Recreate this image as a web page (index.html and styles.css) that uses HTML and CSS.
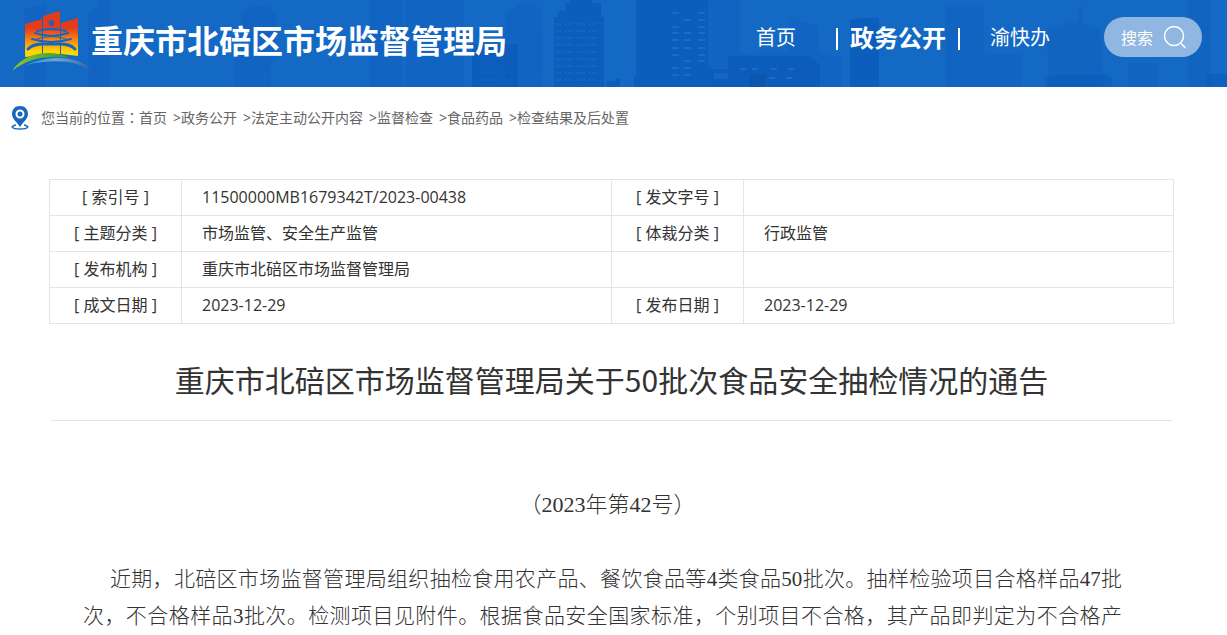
FILE: index.html
```html
<!DOCTYPE html>
<html lang="zh-CN">
<head>
<meta charset="utf-8">
<title>重庆市北碚区市场监督管理局</title>
<link rel="stylesheet" href="styles.css">
</head>
<body>
<header class="header">
  <svg class="skyline" viewBox="0 0 1227 87" preserveAspectRatio="xMidYMax slice" aria-hidden="true">
    <defs>
      <pattern id="win" width="12" height="7" patternUnits="userSpaceOnUse"><path d="M1 3h2m1 0h2m1 0h2" stroke="#2876cb" stroke-width="2" opacity=".35"/></pattern>
      <pattern id="fine" width="20" height="7" patternUnits="userSpaceOnUse"><path d="M1 3h7m3 0h7" stroke="#2472c8" stroke-width="1" stroke-dasharray="2 1" opacity=".35"/></pattern>
    </defs>
    <g fill="#0d58b8" opacity=".25">
      <path d="M24 87V10l22-6v83zM88 87V14l10-8V0h12v87zM234 87V60l7-9V14l12-8h14l9 9v42l-5 8v22zM369 87V0h34v87zM406 87V0h58v87zM505 87V13l17-10h9l12 7v77zM740 87V54l48-3V17l31 10v27l23 3v30zM945 87V5h39v82zM984 87V53l38 2v32zM1128 87V63h30v24zM1188 87V0h23v87zM708 87V0h32v87z"/>
      <path d="M1048 87V60l-1-31 18-5 5-3 10 3 19 5 4 31v27zM1078 25V7h5v18z"/>
    </g>
    <g fill="#0956b8" opacity=".6">
      <path d="M472 87V44h46v43zM554 87V17h4v-6h7V3h5V0h22v3h9v14h3v70zM636 87V0h72v87zM607 87v-6h8v-2h5v8zM634 87V75h8v12zM694 87V69h34V56h81l11 9v22zM850 87V20l12-2h17v69z"/>
    </g>
    <path fill="#0956b8" opacity=".4" d="M1045 87v-9l12-3h50l5 3v9zM1206 87V74h21v13z"/>
    <path fill="url(#win)" d="M556 19h46v64h-46z"/>
    <path fill="url(#fine)" d="M154 60h38v26h-38zM241 70h30v16h-30zM478 49h36v32h-36zM433 60h34v24h-34zM1052 39h46v30h-46zM0 50h13v34H0zM708 2h28v46h-28zM522 13h18v70h-18z"/>
    <path d="M672 13h7m19 0h7m-21 7h7m7 0h7m-33 7h7m19 0h7m-33 6h7m5 0h7m7 0h7m-33 7h7m5 0h7m7 0h7m-33 8h7m5 0h7m7 0h7m-33 7h7m19 0h7m-21 6h7m7 0h7M672 68h7m5 0h7M672 75h7m5 0h7M740 69h6m6 0h6m13 0h6m11 0h6m-25 9h6m11 0h6" stroke="#2473cb" stroke-width="2" opacity=".7"/>
    <path d="M749 74h16v13h-16z" fill="#0b4f9f" opacity=".45"/>
    <path d="M714 73h14v6h-14z" fill="#1d6cc4" opacity=".7"/>
  </svg>
  <a class="brand" href="#">
    <svg class="logo" viewBox="0 0 80 63" aria-hidden="true">
      <defs>
        <linearGradient id="fire" gradientUnits="userSpaceOnUse" x1="0" y1="1" x2="0" y2="46"><stop offset=".38" stop-color="#e33b1c"/><stop offset=".65" stop-color="#f58a12"/><stop offset=".9" stop-color="#ffd400"/></linearGradient>
        <linearGradient id="grass"><stop stop-color="#96c829"/><stop offset="1" stop-color="#259a36"/></linearGradient>
        <linearGradient id="water"><stop stop-color="#2a91df"/><stop offset=".45" stop-color="#6fa3db"/><stop offset="1" stop-color="#3c67a5"/></linearGradient>
      </defs>
      <path fill="url(#fire)" d="M14 14l17-5v36l-17 2zM32 6l17-5v43H32zM50 13l17-5v38l-17-2z"/>
      <g fill="none" stroke="#1766bb" stroke-linecap="round">
        <path d="M26 21q15-4 29 0" stroke-width="2"/>
        <path d="M24 23q17 6 33 0M21 29q19 6 39 0" stroke-width="2"/>
        <path d="M26 29q15-5 29 0" stroke-width="1"/>
        <path d="M17 39q5-5 15-5h17q10 0 15 5" stroke-width="3"/>
      </g>
      <ellipse fill="#1766bb" cx="40.500" cy="13" rx="2.500" ry="3"/>
      <path fill="url(#grass)" d="M1 61C12 43 38 38 60 48 36 45 17 48 1 61z"/>
      <path fill="url(#water)" d="M15 55c23-10 54-10 65 6-14-11-39-12-65-6z"/>
    </svg>
    <span class="site-name">重庆市北碚区市场监督管理局</span>
  </a>
  <nav class="nav">
    <a href="#">首页</a>
    <a class="current" href="#">政务公开</a>
    <a href="#">渝快办</a>
    <button class="search" type="button">搜索
      <svg viewBox="0 0 24 24" aria-hidden="true"><circle cx="11" cy="11" r="9.5"/><path d="M17.5 18l5 5"/></svg>
    </button>
  </nav>
</header>
<nav class="crumbs" aria-label="当前位置">
  <svg class="pin" viewBox="0 0 18 24" aria-hidden="true"><path fill="none" stroke="#1768bd" stroke-width="1.5" d="M5 19C-1 20 0 23 9 23s10-3 4-4"/><path fill="#1768bd" fill-rule="evenodd" d="M9 0C4 0 1 3.500 1 8c0 5 5 8 8 13 3-5 8-8 8-13 0-4.500-3-8-8-8zm0 3.500a4.500 4.500 0 110 9 4.500 4.500 0 010-9z"/><circle cx="9" cy="8" r="2.500" fill="#1768bd"/></svg>
  <div class="trail"><span lang="zh-TW" class="label">您当前的位置：</span><a href="#">首页</a><a class="next" href="#">政务公开</a><a class="next" href="#">法定主动公开内容</a><a class="next" href="#">监督检查</a><a class="next" href="#">食品药品</a><a class="next" href="#">检查结果及后处置</a></div>
</nav>
<main class="main">
  <table class="meta">
    <colgroup><col class="key"><col><col class="key"><col></colgroup>
    <tbody>
      <tr><th scope="row">[ 索引号 ]</th><td>11500000MB1679342T/2023-00438</td><th scope="row">[ 发文字号 ]</th><td></td></tr>
      <tr><th scope="row">[ 主题分类 ]</th><td>市场监管、安全生产监管</td><th scope="row">[ 体裁分类 ]</th><td>行政监管</td></tr>
      <tr><th scope="row">[ 发布机构 ]</th><td>重庆市北碚区市场监督管理局</td><td></td><td></td></tr>
      <tr><th scope="row">[ 成文日期 ]</th><td>2023-12-29</td><th scope="row">[ 发布日期 ]</th><td>2023-12-29</td></tr>
    </tbody>
  </table>
  <h1 class="title">重庆市北碚区市场监督管理局关于50批次食品安全抽检情况的通告</h1>
  <article class="article">
    <p class="issue">（2023年第42号）</p>
    <p class="text">近期，北碚区市场监督管理局组织抽检食用农产品、餐饮食品等4类食品50批次。抽样检验项目合格样品47批次，不合格样品3批次。检测项目见附件。根据食品安全国家标准，个别项目不合格，其产品即判定为不合格产</p>
  </article>
</main>
</body>
</html>
```
FILE: styles.css
```css
* { box-sizing: border-box; }
body {
  margin: 0;
  color: #333;
  background: #fff;
  font: 16px/24px "Noto Sans CJK SC", sans-serif;
}
a { color: inherit; text-decoration: none; }

.header {
  position: relative;
  display: flex;
  justify-content: space-between;
  height: 87px;
  padding: 0 25px 0 11px;
  color: #fff;
  background: #1369c4;
}
.skyline { position: absolute; inset: 0; width: 100%; height: 100%; }
.brand, .nav { position: relative; display: flex; }
.brand { padding-top: 10px; }
.logo { width: 80px; height: 63px; }
.site-name { font-size: 32px; font-weight: 700; line-height: 58px; white-space: nowrap; }
.nav { height: 40px; margin-top: 17px; font-size: 20px; line-height: 40px; white-space: nowrap; }
.current {
  position: relative;
  margin: 0 30px 0 40px;
  padding: 0 14px;
  font-size: 24px;
  font-weight: 700;
}
.current::before, .current::after {
  content: "";
  position: absolute;
  top: 11px;
  width: 2px;
  height: 22px;
  background: #fff;
}
.current::before { left: 0; }
.current::after { right: 0; }
.search {
  display: flex;
  align-items: center;
  gap: 10px;
  width: 98px;
  height: 40px;
  margin-left: 54px;
  padding: 0 0 0 17px;
  border: 0;
  border-radius: 20px;
  color: #fff;
  background: #90b7e2;
  font: inherit;
  font-size: 16px;
}
.search svg { width: 24px; height: 24px; fill: none; stroke: #fff; stroke-width: 1.5; }

.crumbs {
  display: flex;
  align-items: center;
  gap: 12px;
  height: 62px;
  padding-left: 11px;
  color: #666;
  font-size: 14px;
}
.pin { width: 18px; height: 24px; }
.trail { display: flex; padding-bottom: 2px; white-space: nowrap; }
.label { font-family: "Noto Sans CJK SC", sans-serif; }
.next::before { content: ">"; margin-left: 6px; font-family: "Noto Sans", sans-serif; }

.main { padding: 30px 53px 0 49px; }
.meta {
  width: 100%;
  border-collapse: collapse;
  table-layout: fixed;
  font-family: "Open Sans", "Noto Sans CJK SC", sans-serif;
}
.key { width: 132px; }
.meta th, .meta td { height: 36px; padding: 0 0 2px; border: 1px solid #e4e4e4; line-height: 24px; }
.meta th { font-weight: 400; text-align: center; }
.meta td { padding-left: 20px; }
.title {
  margin: 31px 2px 0;
  padding-bottom: 17px;
  border-bottom: 1px solid #e4e4e4;
  font-size: 30px;
  font-weight: 400;
  line-height: 48px;
  text-align: center;
}
.article {
  padding: 65px 52px 0 34px;
  font: 300 21px/37px "Liberation Serif", "Noto Sans CJK SC", serif;
}
.issue { margin: 0; padding-left: 10px; font-size: 22px; text-align: center; }
.text { margin: 38px 0 0; text-indent: 27px; text-align: justify; text-align-last: justify; }
```
